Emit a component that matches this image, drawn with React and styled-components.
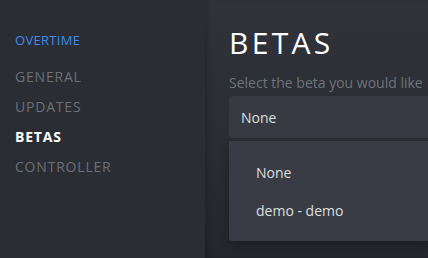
import React from "react";
import styled, { createGlobalStyle } from "styled-components";

const Global = createGlobalStyle`
  html, body { margin: 0; padding: 0; background: #2a2d34; }
  body { font-family: "Open Sans", "Noto Sans", sans-serif; overflow: hidden; }
`;

const Page = styled.div`
  display: flex;
  width: 428px;
  height: 258px;
  overflow: hidden;
`;

const Sidebar = styled.nav`
  width: 205px;
  flex-shrink: 0;
  background: #2a2d34;
  padding: 32px 0 0 15px;
  box-sizing: border-box;
  display: flex;
  flex-direction: column;
`;

const GameTitle = styled.div`
  color: #3d8ce6;
  font-size: 13px;
  letter-spacing: 0.3px;
  line-height: 16px;
  margin-bottom: 14px;
`;

const NavItem = styled.div`
  color: ${(p) => (p.$active ? "#ffffff" : "#6c6f75")};
  font-weight: ${(p) => (p.$active ? 700 : 400)};
  font-size: 14px;
  letter-spacing: 0.8px;
  line-height: 30px;
`;

const Main = styled.main`
  flex: 1;
  background: linear-gradient(180deg, #30333a 0%, #2a2c33 60%, #24262c 100%);
  box-shadow: inset 6px 0 8px -6px rgba(0, 0, 0, 0.3);
  padding: 26px 0 0 24px;
  box-sizing: border-box;
  min-width: 0;
`;

const Heading = styled.h1`
  margin: 0;
  color: #ffffff;
  font-weight: 400;
  font-size: 30px;
  letter-spacing: 3.3px;
  line-height: 34px;
`;

const Subtitle = styled.div`
  color: #6f737a;
  font-size: 14px;
  line-height: 18px;
  margin-top: 14px;
  white-space: nowrap;
  overflow: hidden;
`;

const Select = styled.div`
  margin-top: 4px;
  height: 42px;
  background: #373a42;
  border-radius: 3px 0 0 3px;
  display: flex;
  align-items: center;
  padding-left: 12px;
  color: #dcdedf;
  font-size: 14px;
`;

const Menu = styled.div`
  margin-top: 3px;
  height: 100px;
  background: #393c44;
  border-radius: 0 0 0 3px;
  box-shadow: 0 4px 8px rgba(0, 0, 0, 0.25);
  padding: 22px 0 0 27px;
  box-sizing: border-box;
  display: flex;
  flex-direction: column;
`;

const Option = styled.div`
  color: #dcdedf;
  font-size: 14px;
  line-height: 19px;
  height: 38px;
`;

export default function App() {
  return (
    <>
      <Global />
      <Page>
        <Sidebar>
          <GameTitle>OVERTIME</GameTitle>
          <NavItem>GENERAL</NavItem>
          <NavItem>UPDATES</NavItem>
          <NavItem $active>BETAS</NavItem>
          <NavItem>CONTROLLER</NavItem>
        </Sidebar>
        <Main>
          <Heading>BETAS</Heading>
          <Subtitle>Select the beta you would like</Subtitle>
          <Select>None</Select>
          <Menu>
            <Option>None</Option>
            <Option>demo - demo</Option>
          </Menu>
        </Main>
      </Page>
    </>
  );
}
